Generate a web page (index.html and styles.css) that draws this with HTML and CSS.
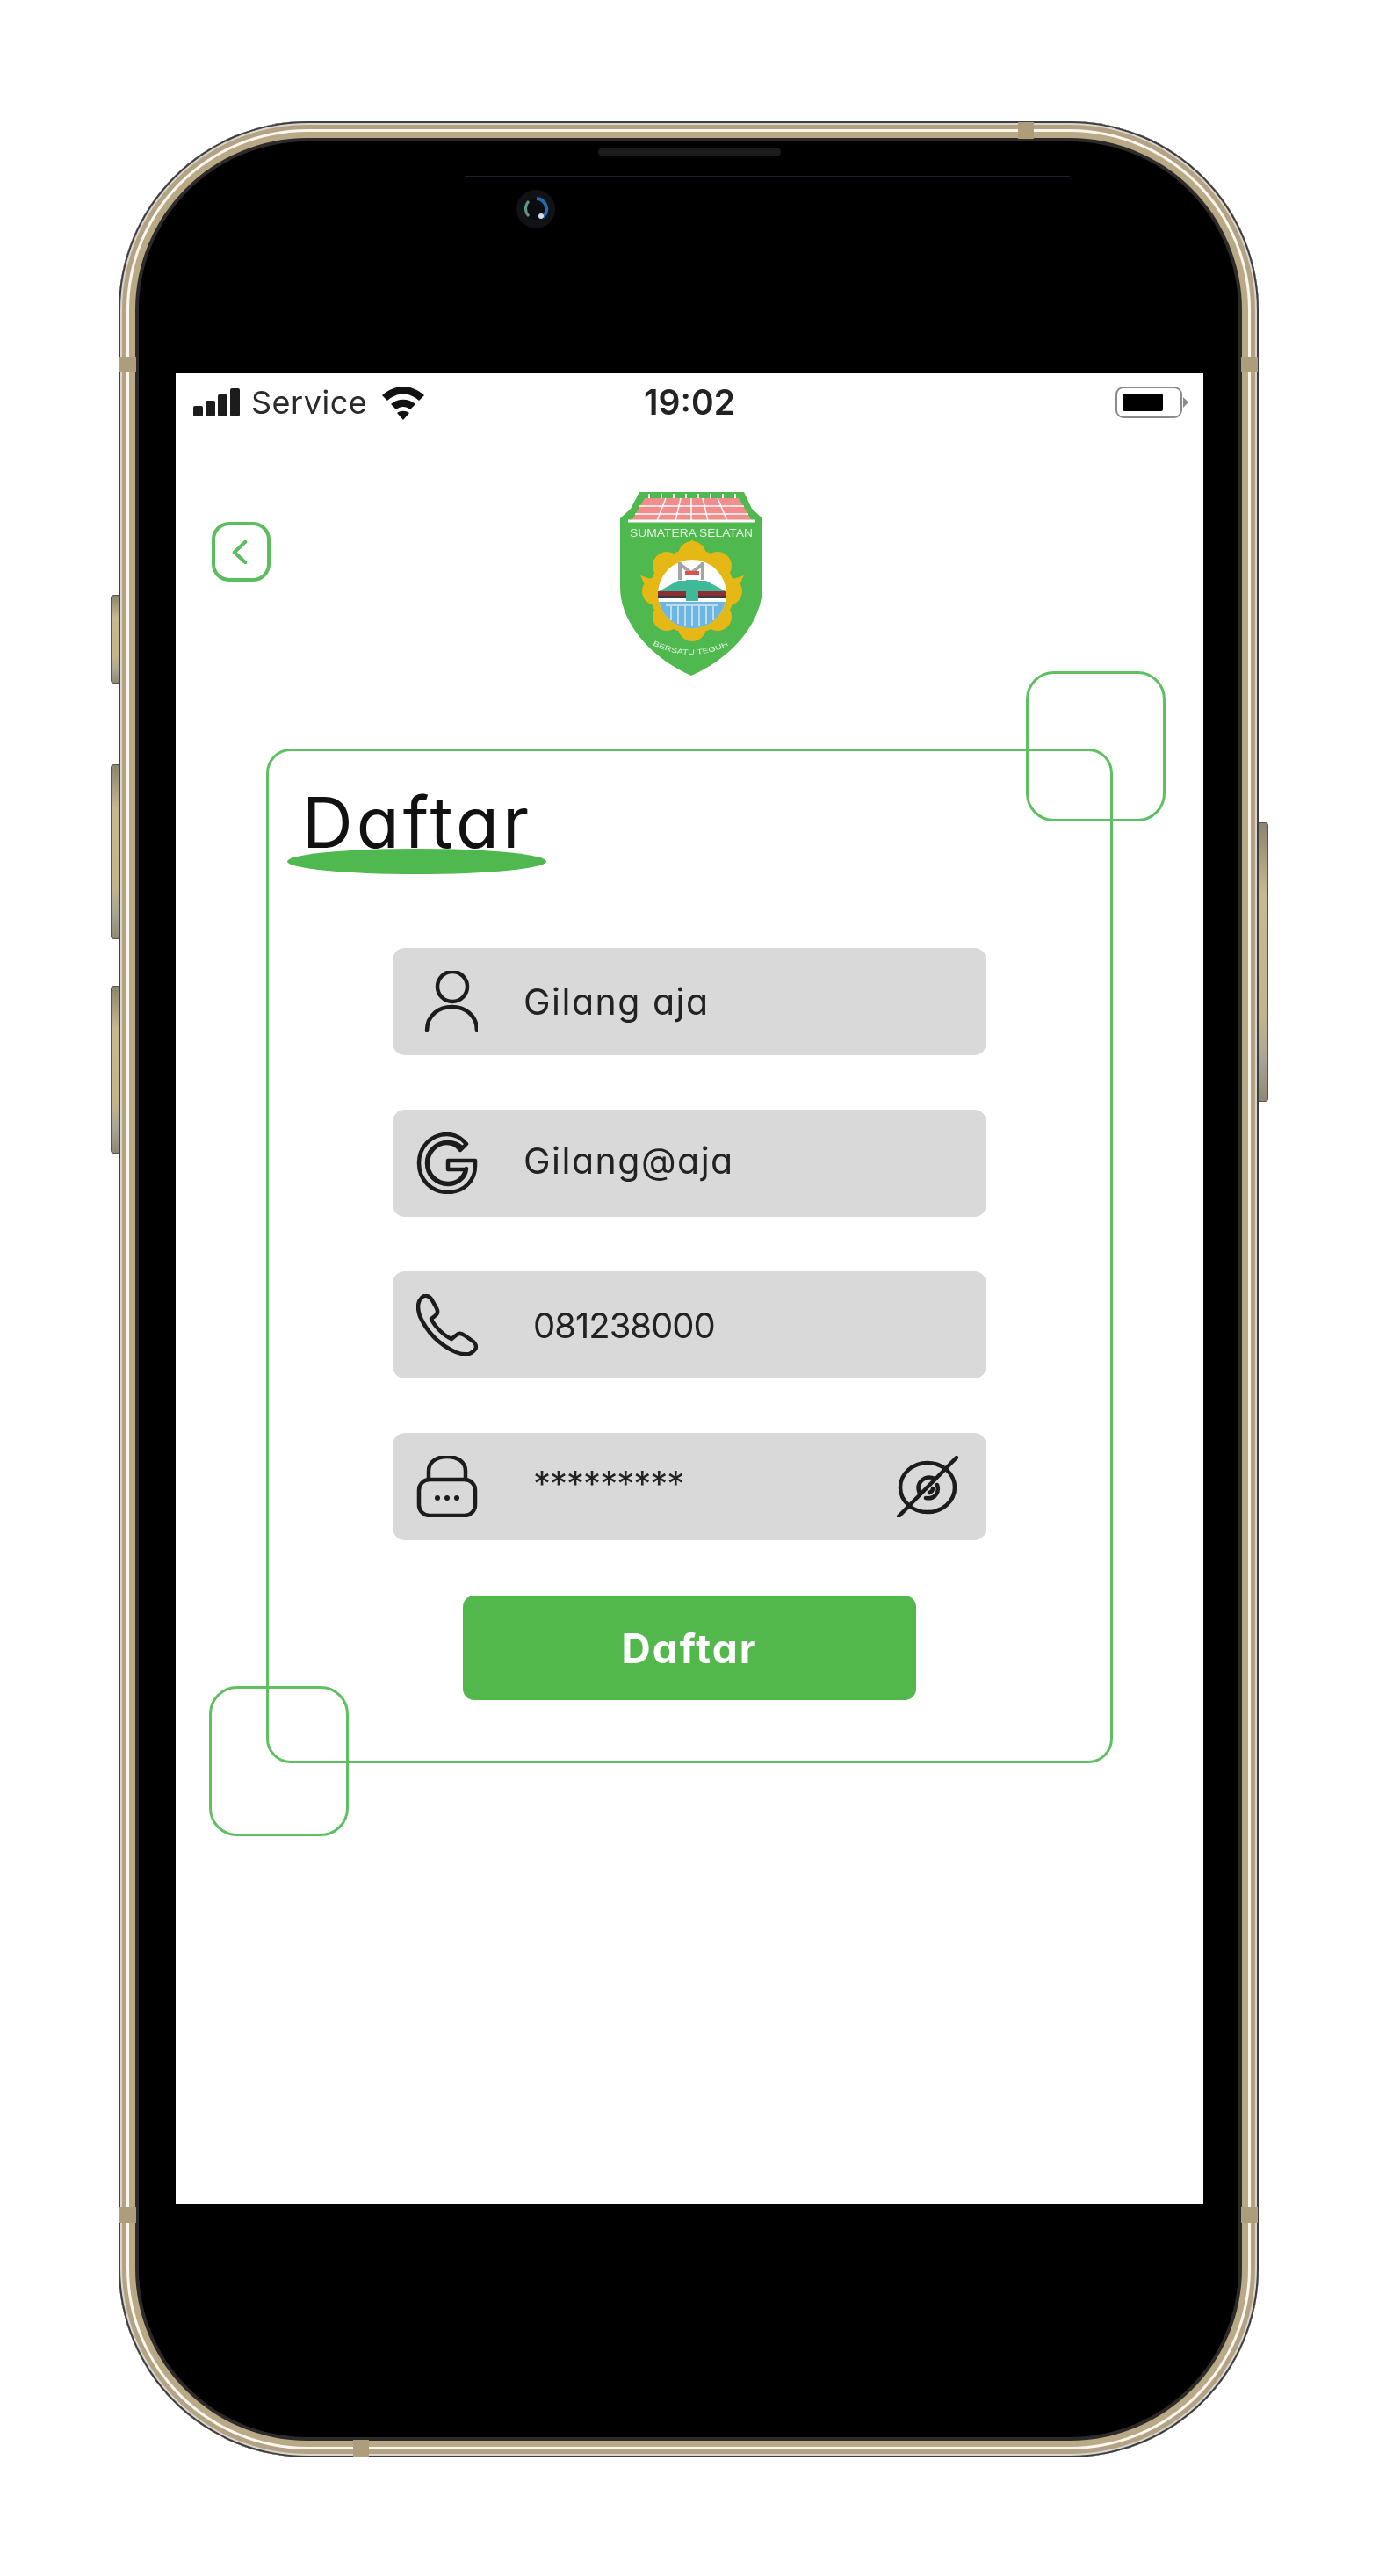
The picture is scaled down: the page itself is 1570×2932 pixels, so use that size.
FILE: index.html
```html
<!DOCTYPE html>
<html lang="id">
<head>
  <meta charset="UTF-8">
  <meta name="viewport" content="width=device-width, initial-scale=1.0">
  <title>Daftar</title>
  <link rel="stylesheet" href="styles.css">
</head>
<body>
  <div class="phone">
    <span class="side-btn btn-a"></span>
    <span class="side-btn btn-b"></span>
    <span class="side-btn btn-c"></span>
    <span class="side-btn btn-d"></span>
    <span class="band band-tl"></span>
    <span class="band band-tr"></span>
    <span class="band band-bl"></span>
    <span class="band band-br"></span>
    <span class="band band-top"></span>
    <span class="band band-bottom"></span>
    <span class="speaker"></span>
    <span class="sensor-line"></span>
    <svg class="camera" viewBox="0 0 44 44">
      <circle cx="22" cy="22" r="22" fill="#101215"/>
      <circle cx="22" cy="22" r="12" fill="#0a0c10"/>
      <path d="M23 10A12 12 0 0 1 30 31" fill="none" stroke="#2468ad" stroke-width="4"/>
      <path d="M14 13A12 12 0 0 0 14 30" fill="none" stroke="#5d9a80" stroke-width="3"/>
      <circle cx="28" cy="30" r="3" fill="#d8d8ee"/>
    </svg>

    <div class="screen">
      <div class="status-bar">
        <div class="status-left">
          <div class="signal"><i></i><i></i><i></i><i></i></div>
          <span class="carrier">Service</span>
          <svg class="wifi" viewBox="0 0 52 40">
            <path d="M2 12C16 -1 36 -1 50 12L44 18C33 8 19 8 8 18Z"/>
            <path d="M12 22C20 15 32 15 40 22L34 28C29 24 23 24 18 28Z"/>
            <path d="M26 40L19 32C23 29 29 29 33 32Z"/>
          </svg>
        </div>
        <span class="clock">19:02</span>
        <div class="battery"><div class="battery-level"></div></div>
      </div>

      <div class="top-row">
        <button class="back-btn">
          <svg viewBox="0 0 20 30" width="18" height="27"><path d="M17 2L3 15L17 28"/></svg>
        </button>
        <svg class="emblem" viewBox="0 0 162 209">
          <defs>
            <path id="motto-curve" d="M30 170Q81 200 132 170"/>
          </defs>
          <path class="emblem-shield" d="M22 0H141L150 19L162 30V108C162 150 125 190 81 209C37 190 0 150 0 108V30L12 19Z"/>
          <path class="emblem-roof" d="M28 7H135L150 33H13Z"/>
          <path class="emblem-roof-lines" d="M52 7L42 33M69 7L63 33M81 7V33M94 7L100 33M111 7L122 33M22 16H141M17 25H146"/>
          <path class="emblem-roof-base" d="M9 33H154"/>
          <path class="emblem-roof-dots" d="M33 2V7M47 2V7M61 2V7M75 2V7M89 2V7M103 2V7M117 2V7M131 2V7"/>
          <text x="81" y="51" text-anchor="middle" class="emblem-text" textLength="140" lengthAdjust="spacingAndGlyphs">SUMATERA SELATAN</text>
          <g class="emblem-flower">
            <circle cx="82" cy="113" r="48"/>
            <circle cx="82" cy="72" r="16"/>
            <circle cx="111" cy="84" r="16"/>
            <circle cx="123" cy="113" r="16"/>
            <circle cx="111" cy="142" r="16"/>
            <circle cx="82" cy="154" r="16"/>
            <circle cx="53" cy="142" r="16"/>
            <circle cx="41" cy="113" r="16"/>
            <circle cx="53" cy="84" r="16"/>
            <path d="M82 54L90 66H74ZM23 95L38 100L30 110ZM141 95L126 100L134 110Z"/>
          </g>
          <circle cx="82" cy="116" r="39" fill="#ffffff"/>
          <path d="M44 125H120A39 39 0 0 1 44 125Z" fill="#6db6e2"/>
          <path class="emblem-falls" d="M58 130V146M66 130V150M74 130V152M82 130V153M90 130V152M98 130V150M106 130V146M52 129H112"/>
          <path d="M44 113L66 101H98L120 113Z" fill="#3fb99a"/>
          <rect x="43" y="113" width="78" height="5" fill="#8b2f35"/>
          <rect x="43" y="118" width="78" height="3" fill="#3a3a3a"/>
          <rect x="75" y="100" width="14" height="24" fill="#3fb99a"/>
          <path d="M68 100V80M94 100V80M68 82L81 92L94 82" fill="none" stroke="#a5a5a5" stroke-width="4"/>
          <rect x="74" y="90" width="16" height="4" fill="#d9534f"/>
          <text class="emblem-text small"><textPath href="#motto-curve" startOffset="8" textLength="90" lengthAdjust="spacingAndGlyphs">BERSATU TEGUH</textPath></text>
        </svg>
      </div>

      <div class="card">
        <span class="corner corner-top"></span>
        <span class="corner corner-bottom"></span>

        <div class="title-wrap">
          <h1>Daftar</h1>
          <span class="title-line"></span>
        </div>

        <div class="fields">
          <div class="field">
            <svg class="icon" viewBox="0 0 70 70">
              <circle cx="41" cy="18" r="17"/>
              <path d="M12 68C12 32 69 32 69 68"/>
            </svg>
            <span class="value">Gilang aja</span>
          </div>
          <div class="field">
            <svg class="icon" viewBox="0 0 70 70">
              <path d="M57 13C51 6 43 2 35 2C16 2 3 17 3 35C3 54 17 68 36 68C55 68 67 54 67 38V32H36V42H56C54 52 46 58 36 58C23 58 13 48 13 35C13 22 23 12 35 12C41 12 46 14 50 20Z"/>
              <path d="M52 17C48 13 42 11 36 11C22 11 12 22 12 35C12 49 23 59 36 59C45 59 56 53 57 41"/>
            </svg>
            <span class="value up">Gilang@aja</span>
          </div>
          <div class="field">
            <svg class="icon" viewBox="0 0 70 70">
              <path d="M6 4C10 0 15 2 18 7L23 16C25 20 24 23 21 25L17 28C20 36 31 47 40 51L45 47C48 44 51 44 55 47L65 54C69 58 69 62 65 65C60 70 53 69 45 66C25 57 12 43 4 25C1 16 1 9 6 4Z"/>
            </svg>
            <span class="value indent">081238000</span>
          </div>
          <div class="field">
            <svg class="icon" viewBox="0 0 70 70">
              <path d="M14 27V17C14 7 23 1 35 1C47 1 56 7 56 17V27"/>
              <rect x="3" y="27" width="64" height="41" rx="12"/>
              <circle class="dot" cx="24" cy="48" r="3"/>
              <circle class="dot" cx="35" cy="48" r="3"/>
              <circle class="dot" cx="46" cy="48" r="3"/>
            </svg>
            <span class="value indent stars">*********</span>
            <svg class="icon eye" viewBox="0 0 70 70">
              <ellipse cx="35" cy="36" rx="31" ry="28"/>
              <path d="M26 43C21 31 31 21 44 26"/>
              <path d="M46 33C49 42 43 50 33 48"/>
              <path d="M37 42C40 41 41 39 41 37"/>
              <path d="M2 69L68 2"/>
            </svg>
          </div>
        </div>

        <button class="submit">Daftar</button>
      </div>
    </div>
  </div>
</body>
</html>
```

FILE: styles.css
```css
html, body {
  margin: 0;
  padding: 0;
  background: #ffffff;
  font-family: 'Inter', 'Liberation Sans', sans-serif;
}
body {
  width: 1570px;
  height: 2932px;
  box-sizing: border-box;
  padding: 138px 137px 0 135px;
  overflow: hidden;
}

/* phone body, rim drawn as stacked inset rings */
.phone {
  position: relative;
  height: 2659px;
  box-sizing: border-box;
  padding: 287px 63px 288px 65px;
  background: #000000;
  border-radius: 215px;
  box-shadow:
    inset 0 0 0 2px #3c3e40,
    inset 0 0 0 4px #d8d6cf,
    inset 0 0 0 9px #b3a384,
    inset 0 0 0 12px #fbf7ee,
    inset 0 0 0 19px #b9a986,
    inset 0 0 0 23px #2c2b29;
}
.side-btn {
  position: absolute;
  width: 9px;
  border: 1px solid #55534d;
  border-right: none;
  border-radius: 4px 0 0 4px;
  background: linear-gradient(180deg, #8b8470, #c8b78f 25%, #c4b48e 70%, #a9a595 85%, #8f8873);
  box-sizing: border-box;
}
.btn-a { left: -9px; top: 539px; height: 101px; }
.btn-b { left: -9px; top: 732px; height: 199px; }
.btn-c { left: -9px; top: 984px; height: 191px; }
.btn-d { right: -11px; top: 798px; height: 318px; width: 11px; transform: scaleX(-1); }

.band {
  position: absolute;
  background: #ae9d7b;
}
.band-tl { left: 1px; top: 268px; width: 19px; height: 17px; }
.band-tr { right: 1px; top: 268px; width: 19px; height: 17px; }
.band-bl { left: 1px; top: 2374px; width: 19px; height: 18px; }
.band-br { right: 1px; top: 2374px; width: 19px; height: 18px; }
.band-top { left: 1024px; top: 1px; width: 18px; height: 19px; }
.band-bottom { left: 267px; bottom: 1px; width: 18px; height: 19px; }

.speaker {
  position: absolute;
  left: 546px;
  top: 30px;
  width: 208px;
  height: 10px;
  border-radius: 5px;
  background: #1b1b1b;
}
.sensor-line {
  position: absolute;
  left: 394px;
  top: 62px;
  width: 689px;
  height: 1px;
  background: #1a2030;
}
.camera {
  position: absolute;
  left: 453px;
  top: 78px;
  width: 44px;
  height: 44px;
}

.screen {
  height: 2084px;
  background: #ffffff;
  box-shadow: 0 -1px 0 #8a8a8a;
}

/* source screenshot is a soft upscale */
.status-bar, .top-row, .card {
  filter: blur(0.6px);
}

.status-bar {
  display: grid;
  grid-template-columns: 1fr auto 1fr;
  align-items: center;
  height: 38px;
  padding: 9px 24px 0 20px;
}
.status-left {
  display: flex;
  align-items: center;
}
.signal {
  display: flex;
  align-items: flex-end;
  gap: 3px;
  height: 32px;
}
.signal i {
  display: block;
  width: 11px;
  background: #1c1c1c;
  border-radius: 2px;
}
.signal i:nth-child(1) { height: 12px; }
.signal i:nth-child(2) { height: 18px; }
.signal i:nth-child(3) { height: 25px; }
.signal i:nth-child(4) { height: 32px; }
.carrier {
  margin-left: 13px;
  font-size: 36px;
  color: #2a2a2a;
  letter-spacing: 0.5px;
}
.wifi {
  width: 52px;
  height: 40px;
  margin-left: 15px;
  fill: #111111;
}
.clock {
  margin-left: 4px;
  font-size: 39px;
  font-weight: 600;
  color: #222222;
}
.battery {
  position: relative;
  justify-self: end;
  box-sizing: border-box;
  width: 76px;
  height: 36px;
  padding: 6px 20px 6px 6px;
  border: 2px solid #8a8a8a;
  border-radius: 9px;
}
.battery::after {
  content: "";
  position: absolute;
  right: -9px;
  top: 10px;
  border-left: 6px solid #8a8a8a;
  border-top: 6px solid transparent;
  border-bottom: 6px solid transparent;
}
.battery-level {
  height: 100%;
  background: #000000;
  border-radius: 2px;
}

.top-row {
  position: relative;
  display: flex;
  justify-content: center;
  height: 209px;
  margin-top: 88px;
  margin-bottom: 83px;
}
.back-btn {
  position: absolute;
  left: 41px;
  top: 34px;
  display: flex;
  align-items: center;
  justify-content: center;
  box-sizing: border-box;
  width: 67px;
  height: 68px;
  padding: 0 4px 0 0;
  background: none;
  border: 4px solid #5cbd5f;
  border-radius: 20px;
}
.back-btn path {
  fill: none;
  stroke: #5cbd5f;
  stroke-width: 4.5;
  stroke-linecap: round;
  stroke-linejoin: round;
}
.emblem {
  width: 162px;
  height: 209px;
  margin-left: 4px;
}
.emblem-shield { fill: #4fb84e; }
.emblem-roof { fill: #f28d8d; }
.emblem-roof-lines { fill: none; stroke: #ffffff; stroke-width: 1.5; }
.emblem-roof-base { fill: none; stroke: #ffffff; stroke-width: 3; }
.emblem-roof-dots { fill: none; stroke: #ffffff; stroke-width: 2; }
.emblem-flower { fill: #e6b815; }
.emblem-falls { fill: none; stroke: #ffffff; stroke-width: 1.5; opacity: 0.7; }
.emblem-text {
  font-family: 'Liberation Sans', sans-serif;
  font-size: 13px;
  fill: #e6f4e2;
}
.emblem-text.small { font-size: 8px; }

.card {
  position: relative;
  box-sizing: border-box;
  width: 964px;
  height: 1155px;
  margin-left: 103px;
  padding: 32px 0 0 20px;
  border: 3px solid #5fc061;
  border-radius: 28px;
}
.corner {
  position: absolute;
  box-sizing: border-box;
  width: 159px;
  height: 171px;
  border: 3px solid #5fc061;
  border-radius: 32px;
}
.corner-top { right: -63px; top: -91px; }
.corner-bottom { left: -68px; bottom: -86px; }

.title-wrap {
  position: relative;
  height: 192px;
}
h1 {
  margin: 0 0 0 18px;
  padding-top: 6px;
  font-size: 80px;
  line-height: 86px;
  font-weight: 400;
  letter-spacing: 4px;
  color: #111111;
  font-feature-settings: 'cv11';
}
.title-line {
  position: absolute;
  left: 1px;
  top: 79px;
  width: 295px;
  height: 29px;
  border-radius: 50%;
  background: #4fb84e;
}

.fields {
  display: flex;
  flex-direction: column;
  gap: 62px;
  margin-left: 121px;
  width: 676px;
}
.field {
  display: flex;
  align-items: center;
  box-sizing: border-box;
  height: 122px;
  padding: 0 32px 0 27px;
  background: #d9d9d9;
  border-radius: 14px;
}
.icon {
  flex: none;
  width: 70px;
  height: 70px;
  fill: none;
  stroke: #1c1c1c;
  stroke-width: 4.5;
  stroke-linecap: round;
  stroke-linejoin: round;
}
.icon .dot { fill: #1c1c1c; stroke: none; }
.icon.eye { margin-left: auto; }
.value {
  margin-left: 52px;
  font-size: 41px;
  letter-spacing: 1.5px;
  color: #222222;
  font-feature-settings: 'cv11';
}
.value.up { margin-top: -6px; }
.value.indent { margin-left: 63px; font-size: 40px; letter-spacing: -1px; }
.value.stars { margin-top: -8px; }

.submit {
  display: block;
  width: 516px;
  height: 119px;
  margin: 63px 0 0 201px;
  padding: 0;
  background: #52b84c;
  border: none;
  border-radius: 13px;
  color: #ffffff;
  font-family: inherit;
  font-size: 46px;
  font-weight: 700;
  letter-spacing: 2px;
  font-feature-settings: 'cv11';
}
```
